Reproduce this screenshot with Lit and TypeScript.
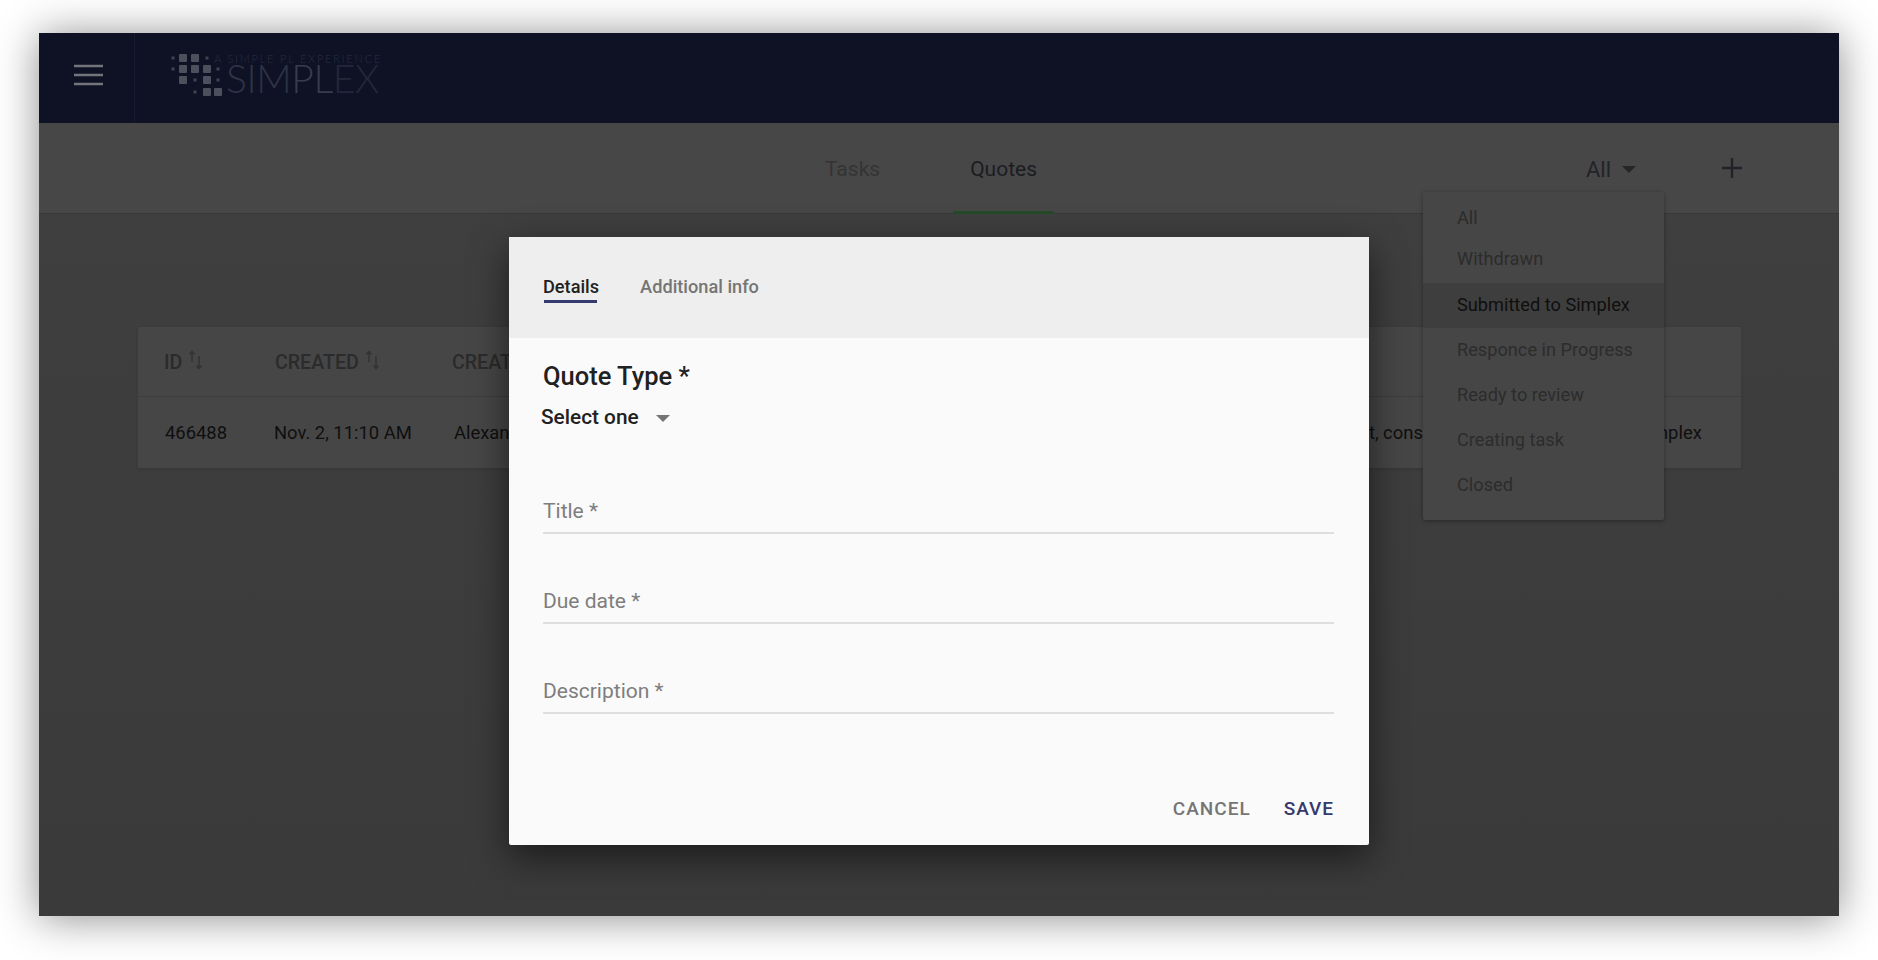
import { LitElement, html, css, svg } from "lit";
import { customElement } from "lit/decorators.js";

const big = [[183,58],[195,58],[183,69],[195,69],[207,69],[183,80],[207,80],[207,92],[218,92]];
const small = [[173,58],[207,58],[173,69],[218,69],[195,80],[218,80],[195,92]];

const sortIcon = html`<svg class="sort" width="18" height="22" viewBox="0 0 18 22"><path d="M5 13V3M2.5 5.5 5 2.5l2.5 3M12 7v12M9.5 16.5 12 19.5l2.5-3" fill="none" stroke="#333" stroke-width="1.5"/></svg>`;

@customElement("app-root")
export class AppRoot extends LitElement {
  static styles = css`
    :host { display: block; width: 1878px; height: 960px; padding: 33px 39px 44px; box-sizing: border-box; background: #fff; font-family: Roboto, "Liberation Sans", sans-serif; overflow: hidden; }
    .window { position: relative; width: 1800px; height: 883px; display: flex; flex-direction: column; background: linear-gradient(#404040, #3a3a3a); box-shadow: 0 2px 40px rgba(0,0,0,.45); }
    .top { height: 90px; flex: none; background: #0e1224; display: flex; align-items: stretch; }
    .burger { width: 96px; flex: none; border-right: 1px solid #171b2f; display: flex; align-items: center; justify-content: center; padding: 0 0 6px 4px; height: 90px; box-sizing: border-box; }
    .burger svg { display: block; }
    .logo { position: relative; width: 260px; }
    .logo svg { position: absolute; left: -135px; top: -33px; }
    .tag { position: absolute; left: 79px; top: 20px; font: 300 11px/11px Lato, sans-serif; letter-spacing: 1.8px; color: #2a2e41; white-space: nowrap; }
    .name { position: absolute; left: 91px; top: 30px; font: 300 39px/30px Lato, sans-serif; letter-spacing: -.4px; color: #2f3346; white-space: nowrap; }
    .name b { font-weight: 300; color: #383b4b; }
    .name i { font-style: normal; color: #23273a; }
    .sub { height: 91px; flex: none; box-sizing: border-box; background: #474747; border-bottom: 1px solid #383838; display: flex; align-items: center; position: relative; }
    .tabs { display: flex; margin-left: 786px; height: 100%; }
    .tab { font-size: 21px; height: 91px; display: flex; align-items: center; box-sizing: border-box; }
    .tab.first { margin-right: 90px; color: #343434; }
    .tab.on { color: #1b1c22; border-bottom: 3px solid #244a28; padding: 3px 17px 0; margin-left: -17px; }
    .filter { position: absolute; left: 1547px; top: 34px; display: flex; align-items: center; font-size: 22px; color: #222329; gap: 11px; }
    .arrow { width: 0; height: 0; border-left: 7px solid transparent; border-right: 7px solid transparent; border-top: 7px solid #262626; }
    .plus { position: absolute; left: 1681px; top: 33px; }
    .main { flex: 1; padding: 113px 98px 0 99px; }
    .table { background: #464646; box-shadow: 0 1px 3px rgba(0,0,0,.12); height: 141px; overflow: hidden; }
    .thead { height: 70px; box-sizing: border-box; border-bottom: 1px solid #3d3d3d; display: grid; grid-template-columns: 111px 177px 200px; padding: 2px 0 0 26px; align-items: center; font-size: 19.6px; font-weight: 500; color: #2b2b2b; }
    .thead span { display: flex; align-items: center; gap: 5px; }
    .sort { margin-top: -6px; }
    .row { height: 70px; display: grid; grid-template-columns: 109px 180px 198px 665px 210px 180px; padding-left: 27px; align-items: center; font-size: 18.4px; color: #0f0f0f; white-space: nowrap; }
    .menu { position: absolute; left: 1384px; top: 159px; width: 241px; height: 328px; background: #464646; border-radius: 2px; box-shadow: 0 1px 4px rgba(0,0,0,.35); font-size: 18.2px; color: #2c2c2c; box-sizing: border-box; padding-top: 5px; }
    .menu div { height: 45px; line-height: 43px; padding-left: 34px; }
    .menu .a { height: 42px; line-height: 42px; }
    .menu .b { height: 44px; line-height: 40px; }
    .menu .sel { background: #3e3e3e; color: #0f0f0f; }
    .dialog { position: absolute; left: 470px; top: 204px; width: 860px; height: 608px; background: #fafafa; border-radius: 2px; box-shadow: 0 12px 36px rgba(0,0,0,.55); display: flex; flex-direction: column; box-sizing: border-box; }
    .dhead { height: 101px; flex: none; background: #eee; display: flex; align-items: flex-start; padding: 39px 0 0 34px; gap: 41px; box-sizing: border-box; font-size: 18.2px; font-weight: 500; color: #757575; }
    .dhead .on { color: #212121; position: relative; }
    .dhead .on::after { content: ""; position: absolute; left: 1px; right: 2px; bottom: -6px; height: 3px; background: #373a6e; }
    .dbody { padding: 22px 34px 0; flex: 1; display: flex; flex-direction: column; }
    .qt { font-size: 25.5px; font-weight: 500; color: #212121; line-height: 32px; }
    .sel1 { display: flex; align-items: center; gap: 17px; font-size: 20.8px; font-weight: 500; color: #212121; margin: 9px 0 0 -2px; line-height: 32px; }
    .sel1 .arrow { border-top-color: #757575; margin-top: 3px; }
    .field { height: 90px; box-sizing: border-box; border-bottom: 2px solid #dedede; font-size: 21px; color: #7e7e7e; display: flex; align-items: flex-end; padding-bottom: 9px; margin-right: 1px; }
    .field.f1 { height: 101px; }
    .actions { margin-top: auto; display: flex; justify-content: flex-end; gap: 33px; font-size: 19px; letter-spacing: 1px; font-weight: 500; color: #757575; padding: 0 1px 24px 0; line-height: 24px; }
    .actions .save { color: #35386b; }
  `;

  render() {
    const dots = svg`${big.map(([x,y]) => svg`<rect x=${x-4} y=${y-4} width="8" height="8" rx="1" fill="#4c4f5c"/>`)}${small.map(([x,y]) => svg`<rect x=${x-1.5} y=${y-1.5} width="3" height="3" fill="#3f4252"/>`)}`;
    return html`
      <div class="window">
        <div class="top">
          <div class="burger"><svg width="29" height="22" viewBox="0 0 29 22"><path d="M0 2h29M0 11h29M0 20h29" stroke="#74757c" stroke-width="2.4" fill="none"/></svg></div>
          <div class="logo">
            <svg width="240" height="100" viewBox="0 0 240 100">${dots}</svg>
            <span class="tag">A SIMPLE PL EXPERIENCE</span>
            <span class="name">SIM<b>PL</b><i>EX</i></span>
          </div>
        </div>
        <div class="sub">
          <div class="tabs">
            <div class="tab first">Tasks</div>
            <div class="tab on">Quotes</div>
          </div>
          <div class="filter">All <span class="arrow"></span></div>
          <svg class="plus" width="24" height="24" viewBox="0 0 24 24"><path d="M12 2v20M2 12h20" stroke="#222328" stroke-width="2.4" fill="none"/></svg>
        </div>
        <div class="main">
          <div class="table">
            <div class="thead">
              <span>ID ${sortIcon}</span>
              <span>CREATED ${sortIcon}</span>
              <span>CREATED BY</span>
            </div>
            <div class="row">
              <span>466488</span>
              <span>Nov. 2, 11:10 AM</span>
              <span>Alexander Smith</span>
              <span></span>
              <span>Project, consulting</span>
              <span>Submitted to Simplex</span>
            </div>
          </div>
        </div>
        <div class="menu">
          <div class="a">All</div>
          <div class="b">Withdrawn</div>
          <div class="sel">Submitted to Simplex</div>
          <div>Responce in Progress</div>
          <div>Ready to review</div>
          <div>Creating task</div>
          <div>Closed</div>
        </div>
        <div class="dialog">
          <div class="dhead">
            <span class="on">Details</span>
            <span>Additional info</span>
          </div>
          <div class="dbody">
            <div class="qt">Quote Type *</div>
            <div class="sel1">Select one <span class="arrow"></span></div>
            <div class="field f1">Title *</div>
            <div class="field">Due date *</div>
            <div class="field">Description *</div>
            <div class="actions"><span>CANCEL</span><span class="save">SAVE</span></div>
          </div>
        </div>
      </div>`;
  }
}
